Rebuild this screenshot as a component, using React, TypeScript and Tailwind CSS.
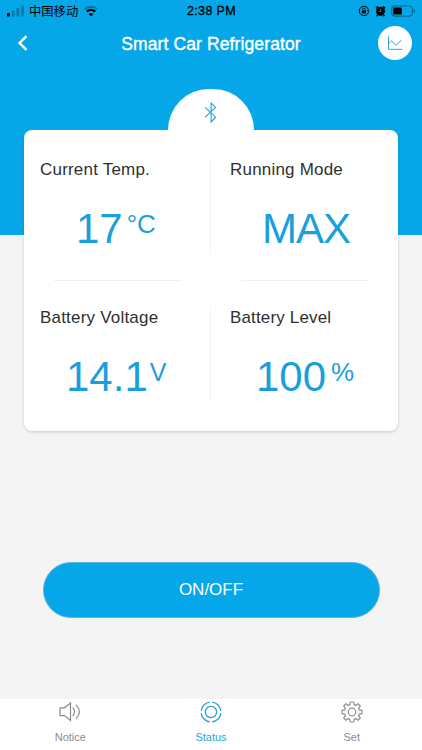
import type { ReactNode } from "react";

type Reading = {
  label: string;
  value: string;
  unit?: string;
  labelClass: string;
  valueClass: string;
  unitClass?: string;
};

const readings: Reading[] = [
  {
    label: "Current Temp.",
    value: "17",
    unit: "°C",
    labelClass: "pl-4 tracking-[0.2px]",
    valueClass: "pl-[52px]",
    unitClass: "ml-[4px] text-[26px]",
  },
  {
    label: "Running Mode",
    value: "MAX",
    labelClass: "pl-[19px] tracking-[0.2px]",
    valueClass: "pl-[51px] tracking-[-1px]",
  },
  {
    label: "Battery Voltage",
    value: "14.1",
    unit: "V",
    labelClass: "pl-4 tracking-[0.2px]",
    valueClass: "pl-[42px]",
    unitClass: "ml-[2px] text-[25px]",
  },
  {
    label: "Battery Level",
    value: "100",
    unit: "%",
    labelClass: "pl-[19px] tracking-[0.15px]",
    valueClass: "pl-[45px]",
    unitClass: "ml-[5px] text-[26px]",
  },
];

function StatusBar() {
  return (
    <div className="flex h-[22px] items-center justify-between pr-[6px] pl-[7px] text-black">
      <div className="flex w-[130px] items-center">
        <svg width="18" height="12" viewBox="0 0 18 12" fill="currentColor">
          <rect x="0" y="8" width="3" height="3.5" rx="0.5" />
          <rect x="4.7" y="5.8" width="3" height="5.7" rx="0.5" opacity="0.25" />
          <rect x="9.4" y="3" width="3" height="8.5" rx="0.5" opacity="0.25" />
          <rect x="14.1" y="0.5" width="3" height="11" rx="0.5" opacity="0.25" />
        </svg>
        <span className="ml-[4px] font-['Noto_Sans_CJK_SC',sans-serif] text-[12.3px] leading-[22px] whitespace-nowrap">
          中国移动
        </span>
        <svg className="ml-[6px]" width="14" height="12" viewBox="0 0 14 12" fill="none" stroke="currentColor">
          <path d="M0.9 4.3a8.7 8.7 0 0 1 12.2 0" strokeWidth="1.9" opacity="0.3" />
          <path d="M2.8 6.6a6 6 0 0 1 8.4 0" strokeWidth="2.1" />
          <path d="M7 11.5 4.7 9.1a3.2 3.2 0 0 1 4.6 0z" fill="currentColor" stroke="none" />
        </svg>
      </div>
      <span className="text-[12.5px] leading-[22px] tracking-[0.35px] whitespace-nowrap [-webkit-text-stroke:0.3px_black]">
        2:38 PM
      </span>
      <div className="flex w-[130px] items-center justify-end">
        <svg width="12" height="12" viewBox="0 0 12 12" fill="none" stroke="currentColor">
          <path d="M10.3 4.2a4.7 4.7 0 1 0 .2 2.9" strokeWidth="1" />
          <path d="M8.8 5h2.8l-1.3 1.8z" fill="currentColor" stroke="none" />
          <rect x="3.8" y="5.4" width="4.2" height="3" fill="currentColor" stroke="none" />
          <path d="M4.7 5.5V4.3a1.2 1.2 0 0 1 2.4 0v1.2" strokeWidth="0.8" />
        </svg>
        <svg className="ml-[5px]" width="11" height="12" viewBox="0 0 11 12">
          <circle cx="5.5" cy="6.3" r="4.5" fill="currentColor" />
          <path d="M1 3.4 3 1.4M10 3.4 8 1.4M2.4 10.2l-.8 1M8.6 10.2l.8 1" stroke="currentColor" strokeWidth="1.6" />
          <path d="M5.7 3.8v2.8H3.8" fill="none" stroke="#06a7e9" strokeWidth="0.9" />
        </svg>
        <svg className="ml-[5px]" width="25" height="12" viewBox="0 0 25 12">
          <rect x="0.7" y="0.9" width="20.6" height="10.2" rx="2.7" fill="none" stroke="currentColor" opacity="0.45" />
          <rect x="2.2" y="2.4" width="8.6" height="7.2" rx="1" fill="currentColor" />
          <path d="M22.6 4.3v3.4q1.5-.5 1.5-1.7t-1.5-1.7" fill="currentColor" opacity="0.45" />
        </svg>
      </div>
    </div>
  );
}

function NavBar() {
  return (
    <div className="flex h-[42px] items-center justify-between pr-[10px] pl-[17px]">
      <button type="button" aria-label="Back" className="flex w-[27px]">
        <svg width="12" height="16" viewBox="0 0 12 16" fill="none" stroke="#fff" strokeWidth="2.4">
          <path d="M9.5 1.2 2.6 8l6.9 6.8" />
        </svg>
      </button>
      <h1 className="pt-[2px] text-[17.5px] tracking-[0.12px] whitespace-nowrap text-white [-webkit-text-stroke:0.4px_white]">
        Smart Car Refrigerator
      </h1>
      <button
        type="button"
        aria-label="History"
        className="flex size-[34px] items-center justify-center rounded-full bg-white"
      >
        <svg width="16" height="16" viewBox="0 0 16 16" fill="none" stroke="#2aa3d8" strokeWidth="1">
          <path d="M1.5 1.3v13h13.8" />
          <path d="M1.7 8.4 4.5 5.9l4.4 4.3 5.6-5" />
        </svg>
      </button>
    </div>
  );
}

function ReadingCell({ reading, index }: { reading: Reading; index: number }) {
  const isLeft = index % 2 === 0;
  const isTop = index < 2;
  return (
    <div className={`flex flex-col ${isTop ? "h-[151px]" : "h-[150px]"}`}>
      <div className={`flex h-[150px] ${isTop ? "pt-[30px]" : "pt-[27px]"}`}>
        <div className="min-w-0 flex-1">
          <p className={`text-[17px] leading-5 whitespace-nowrap text-[#303030] ${reading.labelClass}`}>
            {reading.label}
          </p>
          <div className={`mt-[25px] flex items-start text-[#1b9fdc] ${reading.valueClass}`}>
            <span className="text-[42px] leading-[48px]">{reading.value}</span>
            {reading.unit && <span className={`leading-[38px] ${reading.unitClass}`}>{reading.unit}</span>}
          </div>
        </div>
        {isLeft && <div className="h-[93px] w-px bg-[#f3f3f3]" />}
      </div>
      {isTop && <div className="ml-[30px] h-px w-[127px] bg-[#f0f0f0]" />}
    </div>
  );
}

function Tab({ label, active, children }: { label: string; active?: boolean; children: ReactNode }) {
  return (
    <button
      type="button"
      className={`flex flex-1 flex-col items-center pt-[2px] ${active ? "text-[#2aa3d8]" : "text-[#8c8c8c]"}`}
    >
      {children}
      <span className="mt-[7px] text-[11px] leading-[14px]">{label}</span>
    </button>
  );
}

export default function App() {
  return (
    <div className="flex h-[750px] w-[422px] flex-col overflow-hidden bg-[#f4f4f4] font-['Liberation_Sans',Arial,sans-serif]">
      <header className="h-[235px] shrink-0 bg-[#06a7e9]">
        <StatusBar />
        <NavBar />
      </header>

      <main className="-mt-[146px] flex flex-1 flex-col items-center">
        <div className="flex h-[41px] w-[86px] justify-center rounded-t-full bg-white pt-[13px]">
          <svg width="14" height="21" viewBox="0 0 14 21" fill="none" stroke="#2a9fd6" strokeWidth="1.1">
            <path d="M1.2 5.4 11.6 15.2 7.1 20V1l4.5 4.4L1.2 15.2" />
          </svg>
        </div>
        <section className="grid h-[301px] w-[374px] grid-cols-2 rounded-lg bg-white shadow-[0_1px_3px_rgba(0,0,0,0.18)] [clip-path:inset(0_-6px_-6px_-6px)]">
          {readings.map((reading, index) => (
            <ReadingCell key={reading.label} reading={reading} index={index} />
          ))}
        </section>
        <button
          type="button"
          className="mt-[131px] h-[56px] w-[337px] rounded-full border border-[#58b5df] bg-[#06a7e9] text-[17px] text-white"
        >
          ON/OFF
        </button>
      </main>

      <nav className="flex h-[51px] shrink-0 bg-white">
        <Tab label="Notice">
          <svg width="22" height="22" viewBox="0 0 22 22" fill="none" stroke="currentColor" strokeWidth="1.2">
            <path d="M1 6.8h4.5L11.5 2v17.4l-6-4.8H1z" />
            <path d="M14 6.8q3 3.9 0 7.8M17.2 4.1q6.4 6.6 0 13.2" strokeLinecap="round" />
          </svg>
        </Tab>
        <Tab label="Status" active>
          <svg width="22" height="22" viewBox="0 0 22 22" fill="none" stroke="currentColor" strokeWidth="1.3">
            <circle cx="11" cy="11" r="5.6" />
            <circle cx="11" cy="11" r="9.9" pathLength="80" strokeDasharray="17 3" strokeDashoffset="-1.5" />
          </svg>
        </Tab>
        <Tab label="Set">
          <svg width="22" height="22" viewBox="0 0 22 22" fill="none" stroke="currentColor" strokeWidth="1.2" strokeLinejoin="round">
            <path d="M9.3 1h3.4l.5 2.8 1.5.6L17 2.7 19.3 5l-1.7 2.3.6 1.5 2.8.5v3.4l-2.8.5-.6 1.5 1.7 2.3-2.3 2.3-2.3-1.7-1.5.6-.5 2.8H9.3l-.5-2.8-1.5-.6L5 19.3 2.7 17l1.7-2.3-.6-1.5L1 12.7V9.3l2.8-.5.6-1.5L2.7 5 5 2.7l2.3 1.7 1.5-.6z" />
            <circle cx="11" cy="11" r="3.8" />
          </svg>
        </Tab>
      </nav>
    </div>
  );
}
